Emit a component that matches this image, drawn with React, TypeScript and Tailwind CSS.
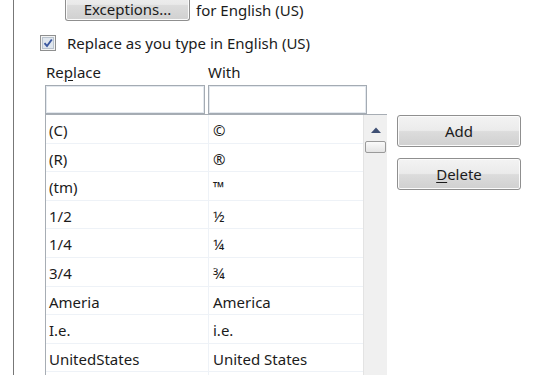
import type React from 'react'

const FONT = { fontFamily: '"Segoe UI", "Noto Sans", "Liberation Sans", sans-serif' }

const ROWS: [string, string][] = [
  ['(C)', '©'],
  ['(R)', '®'],
  ['(tm)', '™'],
  ['1/2', '½'],
  ['1/4', '¼'],
  ['3/4', '¾'],
  ['Ameria', 'America'],
  ['I.e.', 'i.e.'],
  ['UnitedStates', 'United States'],
  ['', ''],
]

const winButton =
  'flex items-center justify-center rounded-[3px] border border-[#8f8f8f] shadow-[inset_0_0_0_1px_#fbfbfb] bg-[linear-gradient(to_bottom,#f3f3f3_0%,#ebebeb_48%,#dcdcdc_52%,#d0d0d0_100%)] text-[15px] text-[#1b1b1b]'

const Button: React.FC<{ className?: string; children: React.ReactNode }> = ({ className, children }) => (
  <div className={`${winButton} ${className ?? ''}`}>{children}</div>
)

const CheckBox: React.FC = () => (
  <svg width="16" height="16" viewBox="0 0 16 16" className="shrink-0">
    <rect x="0.5" y="0.5" width="15" height="15" fill="#f4f4f4" stroke="#8e8f8f" />
    <rect x="2.5" y="2.5" width="11" height="11" fill="#dfe6ee" stroke="#b8c2cd" />
    <path d="M4.5 8.2 L7 11 L11.8 4.5" fill="none" stroke="#3b58a0" strokeWidth="1.9" />
  </svg>
)

const App: React.FC = () => {
  return (
    <div className="w-[533px] h-[375px] bg-white overflow-hidden pl-[13px]" style={FONT}>
      <div className="h-full border-l border-[#777] flex flex-col text-[15px] text-[#1b1b1b]">
        {/* Exceptions — button's top edge lies above the visible area */}
        <div className="flex items-end h-[21px] shrink-0">
          <div className="ml-[51px] w-[125px] h-[21px] shrink-0 flex items-end justify-center pb-[3px] rounded-b-[3px] border border-t-0 border-[#8f8f8f] shadow-[inset_1px_0_0_#fbfbfb,inset_-1px_0_0_#fbfbfb,inset_0_-1px_0_#fbfbfb] bg-[linear-gradient(to_bottom,#ececec_0%,#e9e9e9_22%,#dcdcdc_26%,#d0d0d0_100%)]">
            <span className="leading-[16px]">Exceptions...</span>
          </div>
          <span className="ml-[6px] mb-[3px] leading-[16px]">for English (US)</span>
        </div>

        {/* Checkbox */}
        <div className="flex items-center mt-[14px] ml-[26px] h-[16px] shrink-0">
          <CheckBox />
          <span className="ml-[11px] leading-none">Replace as you type in English (US)</span>
        </div>

        {/* Header labels */}
        <div className="flex mt-[11px] h-[20px] items-center ml-[32px] shrink-0">
          <span className="w-[162px]">
            Re<span className="underline underline-offset-2">p</span>lace
          </span>
          <span>With</span>
        </div>

        {/* Inputs */}
        <div className="flex mt-[3px] ml-[31px] gap-[3px] shrink-0">
          <div className="w-[160px] h-[29px] border border-[#a4abb3] shadow-[inset_0_0_0_1px_#e3e8ee] bg-white" />
          <div className="w-[159px] h-[29px] border border-[#a4abb3] shadow-[inset_0_0_0_1px_#e3e8ee] bg-white" />
        </div>

        {/* List + buttons */}
        <div className="flex ml-[31px] shrink-0">
          <div className="flex w-[342px] border-l border-t border-[#a7adb4] h-[290px]">
            <div className="flex-1 flex flex-col">
              {ROWS.map(([a, b], i) => (
                <div key={i} className="flex h-[28.6px] shrink-0 border-b border-[#eef2f7]">
                  <div className="w-[163px] border-r border-[#eef2f7] pl-[3px] pt-[5px] leading-[20px]">{a}</div>
                  <div className="flex-1 pl-[4px] pt-[5px] leading-[20px]">{b}</div>
                </div>
              ))}
            </div>
            {/* Scrollbar */}
            <div className="w-[24px] bg-[#f0f0f0] border-l border-[#e3e3e3] flex flex-col items-center">
              <svg width="10" height="6" viewBox="0 0 10 6" className="mt-[12px]">
                <path d="M0 6 L5 0.5 L10 6 Z" fill="#3e4f73" />
              </svg>
              <div className="mt-[8px] w-[21px] h-[12px] rounded-[2px] border border-[#9a9a9a] bg-[linear-gradient(to_bottom,#fafafa,#e4e4e4)]" />
            </div>
          </div>

          <div className="flex flex-col ml-[10px] mt-[1px] gap-[11px]">
            <Button className="w-[124px] h-[32px]">Add</Button>
            <Button className="w-[124px] h-[32px]">
              <span>
                <span className="underline underline-offset-2">D</span>elete
              </span>
            </Button>
          </div>
        </div>
      </div>
    </div>
  )
}

export default App
